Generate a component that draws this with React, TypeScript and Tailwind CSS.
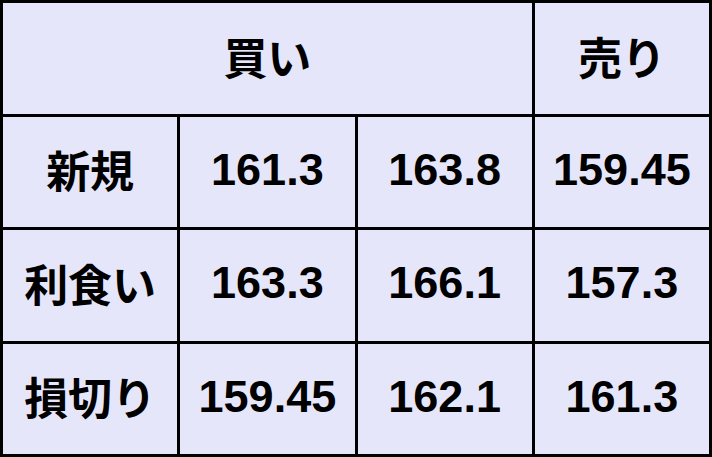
import React from 'react';

const rows: { label: string; values: string[] }[] = [
  { label: '新規', values: ['161.3', '163.8', '159.45'] },
  { label: '利食い', values: ['163.3', '166.1', '157.3'] },
  { label: '損切り', values: ['159.45', '162.1', '161.3'] },
];

const jp = "font-['Noto_Sans_CJK_JP','Noto_Sans',sans-serif] font-semibold text-[44px]";
const num = "font-['Liberation_Sans',Arial,sans-serif] font-bold text-[45px]";

const Cell: React.FC<{ className?: string; children: React.ReactNode }> = ({ className = '', children }) => (
  <div className={`bg-[#e6e6fa] flex items-center justify-center pb-[5px] text-black leading-none ${className}`}>
    {children}
  </div>
);

const App: React.FC = () => {
  return (
    <div className="w-[712px] h-[457px] bg-black p-[3px] grid grid-cols-4 grid-rows-4 gap-[3px]">
      <Cell className={`col-span-3 ${jp}`}>買い</Cell>
      <Cell className={jp}>売り</Cell>
      {rows.map((row) => (
        <React.Fragment key={row.label}>
          <Cell className={jp}>{row.label}</Cell>
          {row.values.map((v, i) => (
            <Cell key={i} className={num}>
              {v}
            </Cell>
          ))}
        </React.Fragment>
      ))}
    </div>
  );
};

export default App;
